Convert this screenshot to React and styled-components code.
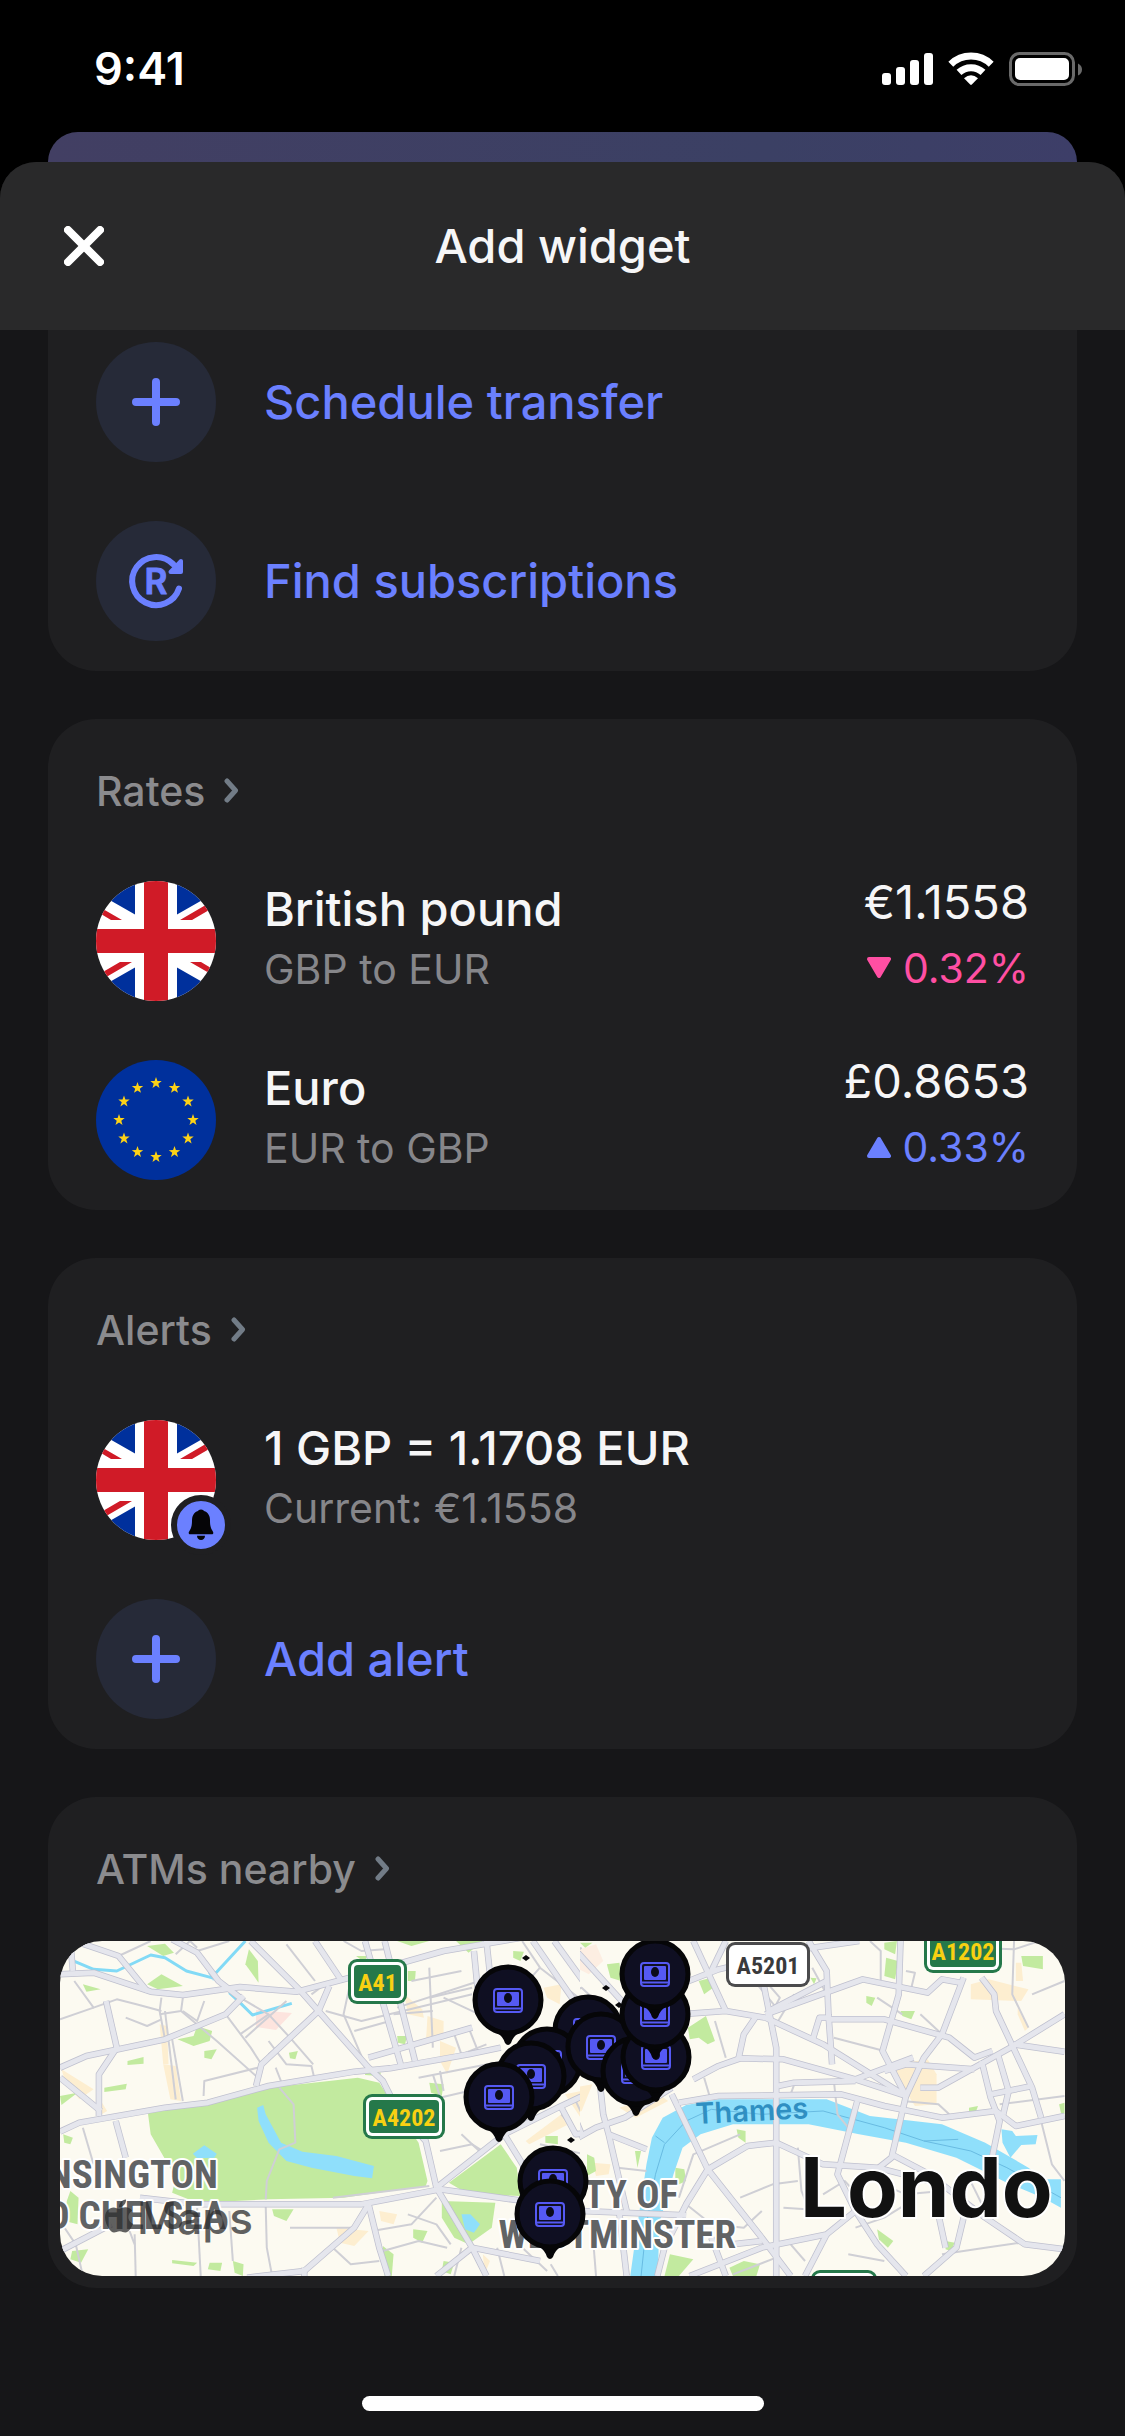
import React from "react";
import styled, { createGlobalStyle } from "styled-components";
import { FaApple } from "react-icons/fa";

const GlobalStyle = createGlobalStyle`
  *, *::before, *::after { box-sizing: border-box; }
  body {
    margin: 0;
    background: #000;
    font-family: Inter, "Liberation Sans", sans-serif;
    color: #f6f6f7;
  }
  h1, h2, p, ul { margin: 0; padding: 0; font-weight: inherit; }
  svg { display: block; flex: none; }
`;

const accent = "#6b80ff";

const Screen = styled.div`
  display: flex;
  flex-direction: column;
  min-height: 100vh;
`;

const StatusBar = styled.div`
  display: flex;
  align-items: center;
  justify-content: space-between;
  height: 132px;
  padding: 6px 43px 0 94px;
`;

const Time = styled.time`
  font-size: 45px;
  line-height: 60px;
  font-weight: 600;
  color: #fff;
`;

const StatusIcons = styled.div`
  display: flex;
  align-items: center;
  gap: 15px;
`;

const BackSheet = styled.div`
  height: 78px;
  margin: 0 48px -48px;
  border-radius: 30px 30px 0 0;
  background: linear-gradient(90deg, #423f63, #3b4064 70%, #3d3e68);
`;

const Sheet = styled.main`
  display: flex;
  flex: 1;
  flex-direction: column;
  border-radius: 36px 36px 0 0;
  background: #161618;
  overflow: hidden;
  isolation: isolate;
`;

const SheetHeader = styled.header`
  display: grid;
  grid-template-columns: 1fr auto 1fr;
  align-items: center;
  height: 168px;
  padding: 0 64px;
  background: #29292a;
`;

const Title = styled.h1`
  font-size: 47px;
  line-height: 60px;
  font-weight: 500;
`;

const CloseButton = styled.button`
  justify-self: start;
  padding: 0;
  border: 0;
  background: none;
  color: #fff;
`;

const Cards = styled.div`
  display: flex;
  flex-direction: column;
  gap: 48px;
  padding: 0 48px;
`;

const Card = styled.section`
  border-radius: ${(p) => (p.$continued ? "0 0 48px 48px" : "48px")};
  background: #1f1f21;
`;

const CardLink = styled.a`
  display: flex;
  align-items: center;
  gap: 18px;
  height: 144px;
  padding: 0 48px;
  color: #8b8b8e;
  font-size: 41px;
  line-height: 60px;
  font-weight: 500;
  text-decoration: none;
`;

const Rows = styled.ul`
  display: flex;
  flex-direction: column;
  gap: 59px;
  padding: ${(p) => (p.$tight ? "12px" : "18px")} 48px 30px;
  list-style: none;
`;

const Row = styled.li`
  display: flex;
  align-items: center;
  gap: 48px;
  height: 120px;
`;

const ActionButton = styled.button`
  display: flex;
  align-items: center;
  gap: 48px;
  flex: 1;
  padding: 0;
  border: 0;
  background: none;
  color: ${accent};
  font: 500 47px/60px Inter, "Liberation Sans", sans-serif;
  text-align: left;
`;

const IconCircle = styled.span`
  display: grid;
  place-items: center;
  width: 120px;
  height: 120px;
  border-radius: 50%;
  background: #262a38;
`;

const Avatar = styled.div`
  position: relative;
  flex: none;
`;

const Badge = styled.span`
  position: absolute;
  right: -15px;
  bottom: -15px;
  border: 6px solid #1f1f21;
  border-radius: 50%;
  background: ${accent};
`;

const Names = styled.div`
  flex: 1;
  padding-bottom: 4px;
`;

const Primary = styled.p`
  font-size: 47px;
  line-height: 60px;
  font-weight: ${(p) => (p.$regular ? 400 : 500)};
`;

const Secondary = styled.p`
  font-size: 41px;
  line-height: 60px;
  color: #86868a;
`;

const Figures = styled.div`
  display: flex;
  flex-direction: column;
  align-items: flex-end;
  gap: 6px;
  padding-bottom: 12px;
`;

const Change = styled.p`
  display: flex;
  align-items: center;
  gap: 12px;
  font-size: 41px;
  line-height: 60px;
  color: ${(p) => (p.$up ? accent : "#ff4fa3")};
`;

const MapFrame = styled.div`
  margin: 0 12px;
  padding-bottom: 12px;

  svg.map {
    width: 100%;
    height: auto;
    border-radius: 42px;
    overflow: hidden;
  }
`;

const Footer = styled.footer`
  display: flex;
  justify-content: center;
  padding: 108px 0 24px;
`;

const HomeIndicator = styled.div`
  width: 402px;
  height: 15px;
  border-radius: 8px;
  background: #fff;
`;

const SignalIcon = () => (
  <svg width="51" height="36" viewBox="0 0 51 36" fill="#fff" aria-hidden="true">
    <rect x="0" y="22" width="9" height="12" rx="3" />
    <rect x="14" y="16" width="9" height="18" rx="3" />
    <rect x="28" y="9" width="9" height="25" rx="3" />
    <rect x="42" y="2" width="9" height="32" rx="3" />
  </svg>
);

const WifiIcon = () => (
  <svg width="46" height="36" viewBox="0 0 46 36" aria-hidden="true">
    <g fill="none" stroke="#fff" strokeWidth="7">
      <path d="M2.8 13.2a29 29 0 0 1 40.4 0" />
      <path d="M11 21.4a17.500 17.500 0 0 1 24 0" />
    </g>
    <path d="M16 27.200q7-6 14 0l-6.200 6.300q-.8.8-1.600 0z" fill="#fff" />
  </svg>
);

const BatteryIcon = () => (
  <svg width="73" height="36" viewBox="0 0 73 36" aria-hidden="true">
    <rect x="1.500" y="2.500" width="63" height="31" rx="9" fill="none" stroke="#6a6a6a" strokeWidth="3" />
    <rect x="6" y="7" width="54" height="22" rx="5" fill="#fff" />
    <path d="M69 12.500q4 2 4 6t-4 6z" fill="#6a6a6a" />
  </svg>
);

const CloseIcon = () => (
  <svg width="40" height="40" viewBox="0 0 40 40" fill="none" stroke="currentColor" strokeWidth="8" strokeLinecap="round">
    <path d="M4 4l32 32M36 4L4 36" />
  </svg>
);

const Chevron = () => (
  <svg width="16" height="26" viewBox="0 0 16 26" fill="none" stroke="#727c87" strokeWidth="5" strokeLinecap="round" strokeLinejoin="round">
    <path d="M4 3l8.500 9.500L4 22" />
  </svg>
);

const PlusIcon = () => (
  <svg width="48" height="48" viewBox="0 0 48 48" fill="none" stroke={accent} strokeWidth="8" strokeLinecap="round">
    <path d="M24 4v40M4 24h40" />
  </svg>
);

const SubscriptionIcon = () => (
  <svg width="60" height="60" viewBox="-30 -30 60 60" fill="none" aria-hidden="true">
    <path d="M23 7.500A24 24 0 1 1 17 -17" stroke={accent} strokeWidth="6" strokeLinecap="round" />
    <path d="M25 -20v11H14.500z" fill={accent} stroke={accent} strokeWidth="4" strokeLinejoin="round" />
    <text x="0" y="13" textAnchor="middle" fontSize="35" fontWeight="600" fill={accent} stroke={accent} strokeLinejoin="round">R</text>
  </svg>
);

const BellIcon = () => (
  <svg width="48" height="48" viewBox="0 0 48 48" fill="#050507" aria-hidden="true">
    <path d="M24 8.500c1.800 0 2.600 1 3 1.600 4 1.300 6 4.600 6 9.400 0 4.500.6 7 2 9.500.9 1.600 1.300 2 1.300 2.900 0 .8-.6 1.300-1.500 1.300H13.200c-.9 0-1.500-.5-1.500-1.300 0-.9.4-1.300 1.300-2.900 1.400-2.500 2-5 2-9.500 0-4.800 2-8.100 6-9.400.4-.6 1.200-1.600 3-1.600z" />
    <path d="M20 34.700h8c0 2.600-1.600 4.300-4 4.300s-4-1.700-4-4.300z" />
  </svg>
);

const UkFlag = () => (
  <svg width="120" height="120" viewBox="0 0 120 120" role="img" aria-label="United Kingdom">
    <clipPath id="uk-round"><circle cx="60" cy="60" r="60" /></clipPath>
    <g clipPath="url(#uk-round)">
      <path fill="#fff" d="M0 0h120v120H0z" />
      <path fill="#00309c" d="M39 0v33.500L0 11.200V0zM81 0v33.500l39-22.300V0zM39 120V86.500L0 108.800V120zM81 120V86.500l39 22.300V120z" />
      <path fill="#d01b27" d="M0 24v6l15 9h11zM84 39h12l24-14v-7zM36 81H24L0 95v7zM120 96v-6l-15-9H94z" />
      <path fill="#d01b27" d="M48 0h24v48h48v24H72v48H48V72H0V48h48z" />
    </g>
  </svg>
);

const starPoints = (cx, cy, r) =>
  Array.from({ length: 10 }, (_, i) => {
    const a = (Math.PI / 5) * i - Math.PI / 2;
    const d = i % 2 ? r * 0.4 : r;
    return `${(cx + d * Math.cos(a)).toFixed(1)},${(cy + d * Math.sin(a)).toFixed(1)}`;
  }).join(" ");

const EuFlag = () => (
  <svg width="120" height="120" viewBox="0 0 120 120" role="img" aria-label="European Union">
    <circle cx="60" cy="60" r="60" fill="#00309c" />
    {Array.from({ length: 12 }, (_, i) => {
      const a = (Math.PI / 6) * i;
      return <polygon key={i} fill="#fdd216" points={starPoints(60 + 37 * Math.sin(a), 60 - 37 * Math.cos(a), 6)} />;
    })}
  </svg>
);

const Triangle = ({ up }) => (
  <svg width="24" height="22" viewBox="0 0 24 22" fill="currentColor" stroke="currentColor" strokeWidth="4" strokeLinejoin="round">
    <path d={up ? "M12 3L22 20H2z" : "M12 19L22 2H2z"} />
  </svg>
);

const west = {
  parks: [
    "M302 995L470 968L640 920L890 890L950 905L1000 990L1060 1085L1085 1200L1080 1215L850 1250L640 1255L440 1265L370 1235L380 1190L310 1060Z",
    "M1145 1205L1290 1090L1335 1160L1345 1245L1200 1240Z",
    "M1125 1260L1275 1265L1265 1340L1200 1390L1160 1370L1125 1310Z",
    "M585 505L610 540L612 605L575 550Z", "M340 580L400 615L330 625L300 610Z",
    "M300 495L350 488L375 515L345 525Z", "M120 610L170 625L130 632Z",
    "M440 735L482 750L475 780L430 795L385 775L430 765Z", "M460 810L495 805L480 835L460 830Z",
    "M245 840L290 828L290 848L245 852Z", "M180 920L243 908L240 925L180 933Z",
    "M697 815L722 810L715 835L700 832Z", "M56 945L105 935L60 972Z",
    "M65 1060L92 1070L85 1090L68 1085Z", "M1000 765L1028 765L1022 790L1002 785Z",
    "M1000 480L1090 480L1040 495Z", "M1030 570L1052 570L1050 600L1030 600Z",
    "M1325 510L1355 512L1345 540L1325 530Z", "M1165 480L1240 480L1200 515Z",
    "M1090 905L1130 910L1125 945L1095 935Z", "M1415 1065L1450 1065L1450 1090L1415 1085Z",
    "M85 1230L108 1250L105 1330L70 1320L75 1260Z", "M90 1410L135 1405L115 1445L85 1435Z",
    "M370 1437L440 1445L430 1455L370 1447Z", "M475 1445L510 1445L505 1470L470 1465Z",
    "M650 1285L710 1285L690 1320L655 1305Z", "M1045 1345L1085 1350L1070 1385L1045 1370Z",
    "M960 1395L990 1420L985 1485L965 1485Z", "M540 1440L570 1450L568 1485L545 1475Z",
    "M910 870L955 875L950 885L910 882Z", "M885 525L915 525L910 545Z", "M1520 480L1560 480L1530 500Z",
    "M1535 1110L1560 1180L1545 1210L1530 1150Z", "M1130 1440L1160 1445L1150 1480L1125 1470Z",
  ],
  sand: [
    "M335 730L355 735L360 850L345 850Z", "M345 850L380 855L395 960L365 955Z", "M60 865L150 925L110 955L70 900Z",
    "M165 950L188 990L165 1005Z", "M1085 705L1130 720L1130 770L1080 790Z", "M1120 780L1165 800L1140 880L1120 840Z",
    "M1020 640L1070 685L1075 710L1030 700Z", "M950 1290L1000 1300L990 1330L955 1320Z",
    "M830 1340L920 1350L880 1395L840 1385Z", "M1410 620L1460 610L1455 670L1420 650Z",
    "M1470 940L1560 920L1568 1010L1520 1020Z", "M1460 1000L1480 1030L1370 1090L1360 1080Z", "M1240 1420L1260 1440L1245 1480Z",
  ],
  water: [
    "M608 980L625 972L632 1000L675 1085L735 1112L830 1125L935 1155L930 1192L880 1185L760 1160L690 1140L640 1085L612 1020Z",
    "M428 1118L460 1093L495 1118L488 1130L440 1132Z",
    "M1180 1300L1205 1300L1232 1330L1215 1355L1190 1345Z", "M470 575L495 570L485 600Z",
  ],
  canals: ["M90 538L150 565L215 570L310 522L350 530L410 570L480 590L575 480", "M530 635L560 665L595 702L705 667"],
  major: [
    "M56 580L150 575L310 632L400 642L560 618L720 632L850 595L1130 510L1240 490L1350 470",
    "M85 480L92 570", "M96 480L220 525L300 630", "M370 475L440 515L500 600L560 650",
    "M590 480L730 630L920 860L960 900L1000 985L1080 1080L1110 1220",
    "M56 860L130 825L350 775L520 700L570 645",
    "M56 1052L110 1025L350 980L470 965L640 915L880 872L980 862L1200 820L1290 800",
    "M56 890L170 990", "M215 800L165 880L165 1005", "M185 660L215 800",
    "M810 615L780 690L620 850L605 915", "M910 480L1010 850", "M965 480L1050 840", "M920 830L1210 740",
    "M1110 1220L1300 1060L1450 980L1568 920", "M280 1250L440 1270L900 1270L1120 1225L1340 1258",
    "M56 1410L200 1330", "M920 1270L880 1340L740 1470L580 1490", "M740 1460V1485",
    "M920 1270L950 1400L975 1485", "M1110 1220L1210 1400L1250 1485", "M1210 1400L1400 1440",
    "M1380 480L1560 760", "M1440 480L1568 670", "M1460 980L1500 1060L1568 1050", "M1300 1060L1380 1200",
    "M212 1020L240 1130", "M770 480L845 600", "M1215 510L1225 620", "M1250 480L1262 600", "M1210 1400L1110 1485",
  ],
  minor: [
    "M220 525L310 480", "M380 520L420 480L440 500", "M440 510L530 480", "M96 600L150 680L215 655L270 670L340 690",
    "M56 715L150 680", "M340 650L335 690L350 775", "M400 650L395 690L335 700", "M350 690L380 955", "M370 775L400 960",
    "M395 690L495 780L610 890", "M460 660L440 720L400 690", "M560 650L640 700L700 770", "M560 760L640 700",
    "M520 700L590 800L620 850", "M610 860L460 900L458 945", "M690 660L575 770", "M640 780L690 850L760 855L770 900",
    "M700 770L640 820", "M660 860L680 915", "M700 770L765 850", "M870 600L850 700L910 850", "M800 690L900 720L1210 640",
    "M1090 560L1100 800", "M1040 600L1180 570", "M1000 680L1230 600", "M880 750L980 720", "M990 700L1100 690",
    "M1090 650L1210 620", "M760 640L810 600", "M670 920L710 970L715 1085L670 1105L635 1200L632 1255",
    "M1060 890L1300 840", "M1080 960L1200 930", "M1100 880L1130 980", "M1160 760L1180 820L1250 790", "M1200 740L1230 820",
    "M1120 1110L1210 1090L1240 1110", "M1180 1060L1230 1110", "M120 1040L150 1150", "M1350 480L1400 560",
    "M265 1360L268 1485", "M240 1320L265 1390", "M440 1280L450 1485", "M530 1290L540 1440", "M632 1275L635 1400L650 1485",
    "M700 1340L880 1340", "M820 1400L870 1450L950 1440", "M930 1350L1040 1330L1110 1250", "M1030 1300L1110 1330L1150 1390",
    "M960 1410L1060 1380L1140 1400", "M820 1250L1090 1215", "M1180 1400L1160 1485", "M1280 1400L1300 1485", "M1340 1390L1420 1470",
    "M850 480L900 510L965 505", "M690 490L770 600", "M1460 1000L1520 1080", "M1400 1090L1568 1130",
    "M1568 700L1400 560L1350 620", "M1130 650L1230 700", "M240 710L300 735L340 715", "M56 1320L100 1390L120 1485",
    "M1430 1450L1450 1485", "M1120 870L1130 930", "M1500 960L1540 1050",
  ],
};

const east = {
  parks: [
    "M900 485L935 480L930 520L900 505Z", "M905 530L938 540L930 595L900 585Z", "M850 645L875 650L865 675L850 665Z",
    "M945 690L985 690L975 715L950 705Z", "M1280 525L1340 525L1340 565L1285 555Z", "M355 740L405 705L430 780L410 790L385 770L360 775Z",
    "M385 600L420 590L425 620L400 640Z", "M490 1045L515 1050L515 1085L495 1070Z", "M880 1345L925 1380L910 1400L885 1375Z",
    "M305 1420L370 1435L330 1485L290 1485Z", "M470 1460L510 1440L555 1450L545 1485L480 1485Z", "M1070 1380L1095 1385L1085 1410L1070 1405Z",
    "M75 1120L95 1130L100 1170L75 1185Z", "M320 1160L345 1165L350 1200L320 1215Z", "M208 1110L225 1110L215 1160Z",
    "M1135 980L1160 975L1155 990L1135 990Z", "M1385 970L1400 965V1000L1390 995Z", "M130 550L165 545L170 600L140 590Z",
    "M695 590L712 592L705 610Z", "M55 485L90 485L70 500Z", "M1340 480L1300 470L1350 485Z",
  ],
  sand: [
    "M1140 610L1190 595L1300 625L1280 660L1140 655Z", "M1265 545L1280 545L1285 600L1265 600Z", "M1270 680L1300 740L1290 750L1270 700Z",
    "M930 850L1020 835L1045 880L1045 970L985 975L940 900Z", "M35 920L90 910L60 990L25 1000Z", "M165 980L275 940L300 960L210 1010Z",
    "M90 1145L140 1150L135 1180L100 1185Z",
  ],
  blush: ["M40 510L100 490L120 540L80 580L45 560Z"],
  water: [
    "M195 1485L215 1330L240 1150L255 1070L285 1010L350 972L440 955L740 955L860 1005L1060 1030L1180 1085L1300 1160L1340 1195L1390 1195L1390 1280L1340 1250L1240 1205L1100 1130L960 1085L830 1060L690 1030L480 1030L390 1060L340 1100L315 1180L275 1330L272 1485Z",
    "M1225 1045L1255 1050L1265 1065L1325 1062L1320 1090L1280 1092L1250 1130L1228 1085Z",
  ],
  ferry: ["M225 1485L240 1330L265 1180L290 1090L350 1020L420 985L560 1000L730 990L900 1040L1010 1080L1140 1110L1240 1160L1390 1250", "M290 1085L265 1065", "M1010 1080L1105 1075"],
  major: [
    "M0 600L190 820", "M20 480L180 670", "M370 480L460 690", "M345 605L440 565L700 500L830 480", "M460 480L420 570",
    "M355 698L460 690L570 710L730 790L960 945", "M565 610L600 800V1485", "M690 480L740 570L745 700L755 850",
    "M945 480L940 640L895 810L960 945L920 1130L885 1160", "M570 700L840 595L1020 635L1060 595L1110 605",
    "M545 705L510 760L495 835", "M370 895L440 855L500 832L620 835L820 895L960 945",
    "M1000 920L1050 920L1250 800L1400 700", "M1120 590L1060 760L1010 830L960 945", "M750 715L900 715L1080 770L1150 830L1200 810",
    "M1170 590L1205 640L1210 690L1310 920L1335 1010", "M1260 790L1400 812",
    "M330 965L440 945L780 940L900 975L1060 1010L1210 990L1265 1035L1400 1005", "M1170 840L1195 950L1220 1020L1200 1125",
    "M1195 940L1310 915", "M1215 820L1245 930L1230 1000", "M825 960L770 1180L820 1290L880 1390L960 1485",
    "M310 940L410 1165L560 1370L640 1485", "M410 1165L520 1095L600 1085L730 1150L880 1160L1060 1210",
    "M0 1100L100 1040L180 1010L310 920", "M110 900L120 1000L135 1060L150 1130L185 1290", "M135 1060L240 1105",
    "M410 1165L350 1270L290 1400L270 1485", "M60 1290L350 1303", "M360 1485L560 1400L740 1360L820 1290",
    "M740 1360L680 1485", "M1060 1210L1180 1310L1290 1390L1400 1405", "M1120 1310L1100 1400L1010 1485", "M420 1370L460 1485",
    "M0 900L60 1060", "M580 690L740 600", "M700 780L720 710L750 710", "M900 870L960 850L1150 865", "M820 895L980 830",
    "M605 915L650 905L820 900", "M1050 1300L1070 1400", "M165 1300L185 1485", "M920 1120L1060 1200", "M480 1390L560 1380",
  ],
  minor: [
    "M0 545L60 500", "M860 480L890 510V600", "M700 560L740 640", "M1260 480L1255 640L1300 740", "M1130 500L1260 505L1330 480",
    "M590 690L610 650L570 600", "M600 730L650 640", "M760 770L900 810", "M430 720L460 830", "M400 890L415 945",
    "M1220 970L1400 945", "M1335 1020L1365 1150L1400 1200", "M1060 1420L1180 1400L1280 1385", "M660 1100L670 1230L700 1310",
    "M500 1250L590 1210L660 1200", "M350 1270L420 1330L510 1340L560 1290", "M950 960L1050 970L1080 1000", "M880 650L950 700",
    "M820 1340L900 1310L960 1270", "M330 1250L370 1120L500 1060", "M0 650L60 620L100 660", "M160 1160L240 1170",
    "M480 1480L600 1430", "M800 1420L900 1440", "M1130 1180L1180 1290", "M760 900L770 1000L800 1040", "M1000 700L1060 760",
    "M90 1350L100 1485", "M620 1280L760 1290", "M640 1390L680 1440", "M960 570L985 575L975 620", "M650 910L640 940",
    "M730 1240L790 1200L850 1270", "M850 1190L960 1240L1060 1230", "M540 600L600 680", "M1310 640L1400 600",
  ],
};

const Tile = ({ data, transform }) => (
  <g transform={transform}>
    {data.sand.map((d) => <path key={d} d={d} fill="#fdeed0" />)}
    {(data.blush || []).map((d) => <path key={d} d={d} fill="#fdeee2" />)}
    {data.parks.map((d) => <path key={d} d={d} fill="#c2ea9f" />)}
    {data.water.map((d) => <path key={d} d={d} fill="#8fdffb" />)}
    <g fill="none" strokeLinejoin="round">
      {(data.canals || []).map((d) => <path key={d} d={d} stroke="#82daf6" strokeWidth="3" vectorEffect="non-scaling-stroke" />)}
      {(data.ferry || []).map((d) => <path key={d} d={d} stroke="#68bbe2" strokeWidth="1" vectorEffect="non-scaling-stroke" />)}
      {data.minor.map((d) => <path key={d} d={d} stroke="#cfcfd5" strokeWidth="2" vectorEffect="non-scaling-stroke" />)}
      {data.major.map((d) => <path key={d} d={d} stroke="#bfc0cf" strokeWidth="6.500" vectorEffect="non-scaling-stroke" />)}
      {data.major.map((d) => <path key={d} d={d} stroke="#e5e6ed" strokeWidth="5" vectorEffect="non-scaling-stroke" />)}
    </g>
  </g>
);

const narrow = '"Liberation Sans Narrow", "Roboto Condensed", "DejaVu Sans Condensed", sans-serif';

const Shield = ({ x, y, width, plain, children }) => (
  <g>
    <rect x={x} y={y} width={width} height="45" rx="9" fill={plain ? "#4b4b4d" : "#25784a"} />
    <rect x={x + 3} y={y + 3} width={width - 6} height="39" rx="6" fill="#fff" />
    {!plain && <rect x={x + 6} y={y + 6} width={width - 12} height="33" rx="4" fill="#25784a" />}
    <text x={x + width / 2} y={y + 32} textAnchor="middle" fontFamily={narrow} fontSize="24" fontWeight="700" fill={plain ? "#3a3a3c" : "#f8d012"}>{children}</text>
  </g>
);

const District = (props) => (
  <text fontFamily={narrow} fontSize="39" fontWeight="700" fill="#616365" stroke="#fff" strokeWidth="4" strokeLinejoin="round" paintOrder="stroke" {...props} />
);

const Pin = ({ x, y }) => (
  <g transform={`translate(${x} ${y})`}>
    <path d="M-13 31Q-5 36-3 43Q0 47 3 43Q5 36 13 31Z" fill="#060608" />
    <circle r="33" fill="#0f0f22" stroke="#060608" strokeWidth="5" />
    <rect x="-14" y="-11" width="28" height="23" rx="3" fill="none" stroke="#5559f3" strokeWidth="2" />
    <rect x="-11" y="-8" width="22" height="14" rx="1" fill="#5559f3" />
    <path d="M-13 8.500H13" stroke="#5559f3" strokeWidth="2" />
    <ellipse cy="-2" rx="4" ry="5" fill="#0b0b1a" />
  </g>
);

const pins = [
  [448, 59], [528, 89], [487, 121], [471, 135], [439, 156], [541, 106],
  [576, 130], [596, 116], [595, 73], [595, 33], [493, 240], [490, 273],
];
const specks = [[466, 17], [546, 47], [559, 64], [511, 199]];

const AtmMap = () => (
  <svg className="map" viewBox="0 0 1005 335" role="img" aria-label="Map of cash machines in London">
    <clipPath id="west-half"><path d="M0 0h520v335H0z" /></clipPath>
    <clipPath id="east-half"><path d="M520 0h485v335H520z" /></clipPath>
    <rect width="1005" height="335" fill="#fcfaf1" />
    <path d="M196 69L232 72L216 89L196 86Z" fill="#fde4de" />
    <g clipPath="url(#west-half)"><Tile data={west} transform="translate(-20 -160) scale(.35714 .33333)" /></g>
    <g clipPath="url(#east-half)"><Tile data={east} transform="translate(500 -160) scale(.36036 .33333)" /></g>

    <text transform="translate(636 183) rotate(-3)" fontSize="29" fontWeight="600" fill="#2f8fc2">Thames</text>
    <District x="158" y="247" textAnchor="end">KENSINGTON</District>
    <District x="166" y="288" textAnchor="end">AND CHELSEA</District>
    <District x="618" y="267" textAnchor="end">CITY OF</District>
    <District x="676" y="307" textAnchor="end">WESTMINSTER</District>
    <text x="740" y="276" fontSize="83" fontWeight="700" fill="#111" stroke="#fff" strokeWidth="4" paintOrder="stroke">Londo</text>

    <Shield x={288} y={18} width={59}>A41</Shield>
    <Shield x={303} y={153} width={82}>A4202</Shield>
    <Shield x={666} y={1} width={84} plain>A5201</Shield>
    <Shield x={864} y={-13} width={78}>A1202</Shield>
    <Shield x={751} y={329} width={66} />

    {specks.map(([x, y]) => <path key={x} d={`M${x - 4} ${y}l4-3 4 3-4 3z`} fill="#08080a" />)}
    {pins.map(([x, y]) => <Pin key={`${x}-${y}`} x={x} y={y} />)}

    <g fill="#2d2d2e" opacity=".75">
      <FaApple x="40" y="256" size="38" color="#2d2d2e" />
      <text x="77" y="293" fontSize="44" fontWeight="500">Maps</text>
    </g>
  </svg>
);

const rates = [
  { name: "British pound", pair: "GBP to EUR", price: "€1.1558", change: "0.32%", up: false, Flag: UkFlag },
  { name: "Euro", pair: "EUR to GBP", price: "£0.8653", change: "0.33%", up: true, Flag: EuFlag },
];

const Action = ({ icon, children }) => (
  <Row>
    <ActionButton type="button">
      <IconCircle>{icon}</IconCircle>
      {children}
    </ActionButton>
  </Row>
);

const CardHeading = ({ href, children }) => (
  <h2>
    <CardLink href={href}>{children}<Chevron /></CardLink>
  </h2>
);

export default function App() {
  return (
    <Screen>
      <GlobalStyle />
      <StatusBar>
        <Time>9:41</Time>
        <StatusIcons>
          <SignalIcon />
          <WifiIcon />
          <BatteryIcon />
        </StatusIcons>
      </StatusBar>
      <BackSheet />
      <Sheet>
        <SheetHeader>
          <CloseButton type="button" aria-label="Close"><CloseIcon /></CloseButton>
          <Title>Add widget</Title>
        </SheetHeader>
        <Cards>
          <Card $continued>
            <Rows $tight>
              <Action icon={<PlusIcon />}>Schedule transfer</Action>
              <Action icon={<SubscriptionIcon />}>Find subscriptions</Action>
            </Rows>
          </Card>

          <Card>
            <CardHeading href="#rates">Rates</CardHeading>
            <Rows>
              {rates.map(({ name, pair, price, change, up, Flag }) => (
                <Row key={name}>
                  <Avatar><Flag /></Avatar>
                  <Names>
                    <Primary>{name}</Primary>
                    <Secondary>{pair}</Secondary>
                  </Names>
                  <Figures>
                    <Primary $regular>{price}</Primary>
                    <Change $up={up}><Triangle up={up} />{change}</Change>
                  </Figures>
                </Row>
              ))}
            </Rows>
          </Card>

          <Card>
            <CardHeading href="#alerts">Alerts</CardHeading>
            <Rows>
              <Row>
                <Avatar>
                  <UkFlag />
                  <Badge><BellIcon /></Badge>
                </Avatar>
                <Names>
                  <Primary>1 GBP = 1.1708 EUR</Primary>
                  <Secondary>Current: €1.1558</Secondary>
                </Names>
              </Row>
              <Action icon={<PlusIcon />}>Add alert</Action>
            </Rows>
          </Card>

          <Card>
            <CardHeading href="#atms">ATMs nearby</CardHeading>
            <MapFrame><AtmMap /></MapFrame>
          </Card>
        </Cards>
        <Footer><HomeIndicator /></Footer>
      </Sheet>
    </Screen>
  );
}
